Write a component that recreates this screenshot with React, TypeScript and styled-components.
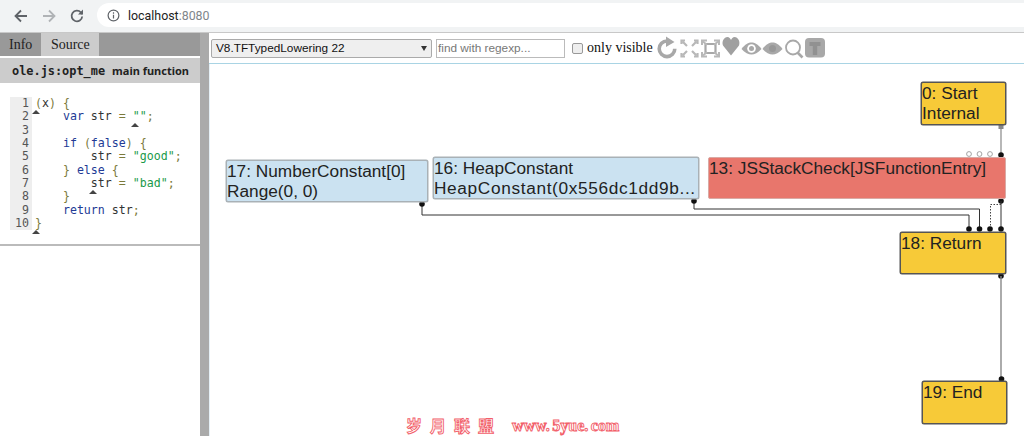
import React from "react";
import styled, { createGlobalStyle } from "styled-components";

const Global = createGlobalStyle`
  html, body { margin: 0; padding: 0; width: 1024px; height: 436px; overflow: hidden; background: #fff; }
  #root { width: 1024px; height: 436px; }
`;

const Page = styled.div`
  width: 1024px; height: 436px; display: flex; flex-direction: column; overflow: hidden; position: relative;
`;
const BrowserBar = styled.header`
  height: 33px; flex: none; background: #f1f3f4; border-bottom: 1px solid #c8c8c8; display: flex; align-items: center; padding: 0 0 0 13px; box-sizing: border-box;
`;
const NavIcon = styled.svg`
  width: 16px; height: 16px; margin-right: 12px; flex: none;
`;
const Omnibox = styled.div`
  flex: 1; height: 24px; margin-top: -2px; background: #fff; border-radius: 12px 0 0 12px; display: flex; align-items: center; padding-left: 10px;
  font: 12.4px "Roboto", "Noto Sans", sans-serif; color: #222; gap: 8px;
`;
const Port = styled.span` color: #80868b; margin-left: -8px; `;
const Main = styled.div` flex: 1; display: flex; min-height: 0; `;
const Left = styled.aside` width: 200px; flex: none; display: flex; flex-direction: column; `;
const Tabs = styled.div` height: 23px; background: #999; display: flex; `;
const Tab = styled.div<{ $active?: boolean }>`
  padding: 0 9px; width: ${p => (p.$active ? "auto" : "58px")}; box-sizing: border-box; text-align: center;
  background: ${p => (p.$active ? "transparent" : "#ccc")}; font: 14px/23px "Liberation Serif", serif; color: #222;
`;
const Title = styled.div`
  height: 25px; margin-top: 2px; background: #ccc; display: flex; align-items: center; padding-left: 12px; gap: 7px; color: #222;
`;
const TitleMono = styled.span` font: bold 11.9px "DejaVu Sans Mono", monospace; `;
const TitleFn = styled.span` font: bold 11px "Noto Sans", sans-serif; `;
const CodeBlock = styled.div`
  margin-top: 14px; padding: 0 0 14px 10px; position: relative; display: flex; border-bottom: 2px solid #bbb;
`;
const Gutter = styled.ol`
  margin: 0; padding: 0 3px 0 0; list-style: none; width: 19px; background: #eee; text-align: right;
  font: 11.6px/13.35px "DejaVu Sans Mono", monospace; color: #555;
`;
const Lines = styled.pre`
  margin: 0 0 0 3px; font: 11.6px/13.35px "DejaVu Sans Mono", monospace; color: #333;
`;
const Pun = styled.span` color: #7b7a3a; `;
const Kw = styled.span` color: #223a95; `;
const Str = styled.span` color: #1a9a4a; `;
const Mark = styled.i<{ $x: number; $y: number }>`
  position: absolute; left: ${p => p.$x}px; top: ${p => p.$y}px; width: 0; height: 0;
  border-left: 4px solid transparent; border-right: 4px solid transparent; border-bottom: 4px solid #444;
`;
const Divider = styled.div` width: 9px; flex: none; background: #aaa; `;
const Right = styled.section` flex: 1; display: flex; flex-direction: column; min-width: 0; background: #fff; `;
const Toolbar = styled.div`
  height: 31px; flex: none; box-sizing: border-box; border-bottom: 1px solid #a9d4e4; display: flex; align-items: center; padding: 0 0 0 2px; background: #fff;
`;
const GraphSelect = styled.div`
  width: 221px; height: 19px; box-sizing: border-box; border: 1px solid #aaa; border-radius: 2px; background: #efefef; display: flex; align-items: center; justify-content: space-between;
  padding: 0 4px; font: 11.8px "Liberation Sans", sans-serif; color: #111;
`;
const Caret = styled.span` width: 0; height: 0; border-left: 3px solid transparent; border-right: 3px solid transparent; border-top: 5px solid #333; `;
const Search = styled.div`
  margin-left: 4px; width: 129px; height: 19px; box-sizing: border-box; border: 1px solid #bbb; font: 11.8px/17px "Liberation Sans", sans-serif; color: #777; padding-left: 1px; background: #fff;
`;
const Check = styled.span`
  margin-left: 7px; width: 11px; height: 11px; box-sizing: border-box; border: 1px solid #999; border-radius: 2px; background: #eee; flex: none;
`;
const CheckLabel = styled.span` margin-left: 4px; font: 14px "Liberation Serif", serif; color: #111; white-space: nowrap; `;
const Tool = styled.svg<{ $w: number }>`
  width: ${p => p.$w}px; height: 24px; flex: none; fill: #a8a8a8; display: block;
`;
const Tools = styled.div` display: flex; align-items: center; margin-left: 3px; `;
const Canvas = styled.div` flex: 1; position: relative; background: #fff; border-left: 1px solid #e6f0f6; `;
const Edges = styled.svg` position: absolute; left: -210px; top: -64px; width: 1024px; height: 436px; pointer-events: none; `;
const kindBg = { control: "#f7ca38", const: "#cbe2f1", check: "#e8766c" };
const kindEdge = { control: "#555", const: "#a9b1b6", check: "#d9aaa5" };
const Node = styled.div<{ $x: number; $y: number; $w: number; $h: number; $kind: "control" | "const" | "check" }>`
  position: absolute; left: ${p => p.$x - 210}px; top: ${p => p.$y - 64}px; width: ${p => p.$w}px; height: ${p => p.$h}px; box-sizing: border-box;
  border-radius: 2px; font: 17.25px/20px "Liberation Sans", sans-serif; color: #222; white-space: nowrap; overflow: hidden;
  background: ${p => kindBg[p.$kind]};
  border: 1px solid ${p => kindEdge[p.$kind]};
  box-shadow: ${p => (p.$kind === "check" ? "none" : `0 0 0 0.5px ${kindEdge[p.$kind]}`)};
`;
const WideLine = styled.span` letter-spacing: 0.65px; `;
const Watermark = styled.div`
  position: absolute; left: 406px; top: 416px; display: flex; font-size: 16px; line-height: 19px; font-weight: 700; color: #fff;
  -webkit-text-stroke: 0.9px #f2606a; white-space: nowrap;
`;
const WmCn = styled.span` font-family: "Noto Sans CJK SC", sans-serif; letter-spacing: 8px; width: 106px; `;
const WmEn = styled.span` font-family: "Liberation Serif", serif; font-size: 16px; word-spacing: -1.5px; letter-spacing: 0; `;

const Dot = ({ x, y }: { x: number; y: number }) => <circle cx={x} cy={y} r={2.8} fill="#111" />;
const Open = ({ x }: { x: number }) => <circle cx={x} cy={154} r={2.4} fill="#fff" stroke="#999" strokeWidth={0.9} />;

export default function App() {
  return (
    <Page>
      <Global />
      <BrowserBar>
        <NavIcon viewBox="0 0 16 16" fill="none" stroke="#5f6368" strokeWidth="1.8"><path d="M14 8H2.5M8 2.5 2.5 8 8 13.5" /></NavIcon>
        <NavIcon viewBox="0 0 16 16" fill="none" stroke="#b0b3b6" strokeWidth="1.8"><path d="M2 8h11.500M8 2.500 13.500 8 8 13.500" /></NavIcon>
        <NavIcon viewBox="0 0 16 16" fill="none" stroke="#5f6368" strokeWidth="1.8"><path d="M13.200 8.500a5.300 5.300 0 1 1-1.300-4L13.500 6" /><path d="M14 1.500v5H9" fill="#5f6368" stroke="none" /></NavIcon>
        <Omnibox>
          <svg width="13" height="13" viewBox="0 0 14 14" fill="none" stroke="#5f6368" strokeWidth="1.3"><circle cx="7" cy="7" r="5.800" /><path d="M7 6.200v4M7 3.600v1.400" /></svg>
          <span>localhost</span><Port>:8080</Port>
        </Omnibox>
      </BrowserBar>
      <Main>
        <Left>
          <Tabs><Tab $active>Info</Tab><Tab>Source</Tab></Tabs>
          <Title><TitleMono>ole.js:opt_me</TitleMono><TitleFn>main function</TitleFn></Title>
          <CodeBlock>
            <Gutter>{[1,2,3,4,5,6,7,8,9,10].map(n => <li key={n}>{n}</li>)}</Gutter>
            <Lines>
              <Pun>(</Pun>x<Pun>)</Pun> <Pun>{"{"}</Pun>{"\n"}
              {"    "}<Kw>var</Kw> str <Pun>=</Pun> <Str>""</Str><Pun>;</Pun>{"\n"}
              {"\n"}
              {"    "}<Kw>if</Kw> <Pun>(</Pun><Kw>false</Kw><Pun>)</Pun> <Pun>{"{"}</Pun>{"\n"}
              {"        "}str <Pun>=</Pun> <Str>"good"</Str><Pun>;</Pun>{"\n"}
              {"    "}<Pun>{"}"}</Pun> <Kw>else</Kw> <Pun>{"{"}</Pun>{"\n"}
              {"        "}str <Pun>=</Pun> <Str>"bad"</Str><Pun>;</Pun>{"\n"}
              {"    "}<Pun>{"}"}</Pun>{"\n"}
              {"    "}<Kw>return</Kw> str<Pun>;</Pun>{"\n"}
              <Pun>{"}"}</Pun>
            </Lines>
            <Mark $x={32} $y={13} /><Mark $x={131} $y={26} /><Mark $x={89} $y={93} /><Mark $x={32} $y={133} />
          </CodeBlock>
        </Left>
        <Divider />
        <Right>
          <Toolbar>
            <GraphSelect>V8.TFTypedLowering 22<Caret /></GraphSelect>
            <Search>find with regexp...</Search>
            <Check />
            <CheckLabel>only visible</CheckLabel>
            <Tools>
              <Tool $w={23} viewBox="0 0 23 24">
                <path d="M11 5a7.800 7.800 0 1 0 7.800 7.800" fill="none" stroke="#a8a8a8" strokeWidth="3.600" />
                <path d="M10 0.500 18.500 6 10 11z" />
              </Tool>
              <Tool $w={21} viewBox="0 0 21 24">
                <path d="M2.500 8V4.500H6M15 4.500h3.500V8M2.500 17v3.500H6M18.500 17v3.500H15" fill="none" stroke="#b8b8b8" strokeWidth="2.200" />
                <path d="M3.500 5.500 8 10M17.500 5.500 13 10M3.500 19.500 8 15M17.500 19.500 13 15" fill="none" stroke="#b8b8b8" strokeWidth="2.200" />
              </Tool>
              <Tool $w={21} viewBox="0 0 21 24">
                <path d="M2 9V4.500h5M14 4.500h5V9M2 16v4.500h5M19 16v4.500h-5" fill="none" stroke="#b8b8b8" strokeWidth="2" />
                <path d="M5.500 8h10v9h-10z" fill="none" stroke="#a8a8a8" strokeWidth="2.200" />
                <path d="M3 5.500 7 9M18 5.500 14 9M3 19.500 7 16M18 19.500 14 16" fill="none" stroke="#b8b8b8" strokeWidth="1.800" />
              </Tool>
              <Tool $w={20} viewBox="0 0 20 24"><path d="M10 19.500 2 9.500C.5 5.500 3 1 6.500 1 8 1 9.500 2.500 10 4 10.500 2.500 12 1 13.500 1 17 1 19.500 5.500 18 9.500z" fill="#a0a0a0" /></Tool>
              <Tool $w={21} viewBox="0 0 21 24">
                <path d="M0.500 13C4 8 7.500 6.500 10.500 6.500S17 8 20.500 13c-3.500 4-7 5.500-10 5.500S4 17 0.500 13z" />
                <circle cx="10.500" cy="12.500" r="4.300" fill="#fff" />
                <circle cx="10.500" cy="12.500" r="2.500" />
              </Tool>
              <Tool $w={21} viewBox="0 0 21 24">
                <path d="M0.500 13C4 8 7.500 6.500 10.500 6.500S17 8 20.500 13c-3.500 4-7 5.500-10 5.500S4 17 0.500 13z" />
                <circle cx="10.500" cy="12.500" r="3.500" fill="#989898" />
              </Tool>
              <Tool $w={21} viewBox="0 0 21 24">
                <circle cx="10" cy="11.500" r="7" fill="none" stroke="#a8a8a8" strokeWidth="1.800" />
                <path d="M14.500 16.500 19.500 21.500" fill="none" stroke="#a8a8a8" strokeWidth="2.600" />
              </Tool>
              <Tool $w={22} viewBox="0 0 22 24">
                <rect x="1" y="2" width="20" height="19.500" rx="4" />
                <path d="M5.500 6h11v4h-3.300v9h-4.400v-9H5.500z" fill="#919191" />
              </Tool>
            </Tools>
          </Toolbar>
          <Canvas>
            <Edges viewBox="0 0 1024 436" fill="none">
              <path d="M1001 127V155" stroke="#888" strokeWidth="1.200" />
              <rect x="998.500" y="125" width="5" height="4" fill="#888" />
              <Dot x={1001} y={155} />
              <Open x={969} /><Open x={979.500} /><Open x={990} />
              <Dot x={1001} y={201} />
              <path d="M1001 201V229" stroke="#333" strokeWidth="1" />
              <path d="M1001 204.500H990.500V229" stroke="#444" strokeWidth="1" strokeDasharray="1.500 1.500" />
              <path d="M694 201V209H979.500V229" stroke="#333" strokeWidth="1" />
              <path d="M422 203V215H969V229" stroke="#333" strokeWidth="1" />
              <Dot x={694} y={201} /><Dot x={422} y={204} />
              <Dot x={969} y={229} /><Dot x={979.500} y={229} /><Dot x={990} y={229} /><Dot x={1001} y={229} />
              <Dot x={1001} y={276} />
              <path d="M1001 276V379" stroke="#888" strokeWidth="1.400" />
              <Dot x={1001.500} y={379} />
            </Edges>
            <Node $kind="control" $x={921} $y={82} $w={85} $h={43}>0: Start<br />Internal</Node>
            <Node $kind="check" $x={708} $y={157} $w={298} $h={42}>13: JSStackCheck[JSFunctionEntry]</Node>
            <Node $kind="const" $x={226} $y={160} $w={202} $h={42}>17: NumberConstant[0]<br />Range(0, 0)</Node>
            <Node $kind="const" $x={433} $y={157} $w={266} $h={42}>16: HeapConstant<br /><WideLine>HeapConstant(0x556dc1dd9b...</WideLine></Node>
            <Node $kind="control" $x={900} $y={232} $w={106} $h={42}>18: Return</Node>
            <Node $kind="control" $x={922} $y={381} $w={85} $h={43}>19: End</Node>
          </Canvas>
        </Right>
      </Main>
      <Watermark><WmCn>岁月联盟</WmCn><WmEn>www. 5yue. com</WmEn></Watermark>
    </Page>
  );
}
